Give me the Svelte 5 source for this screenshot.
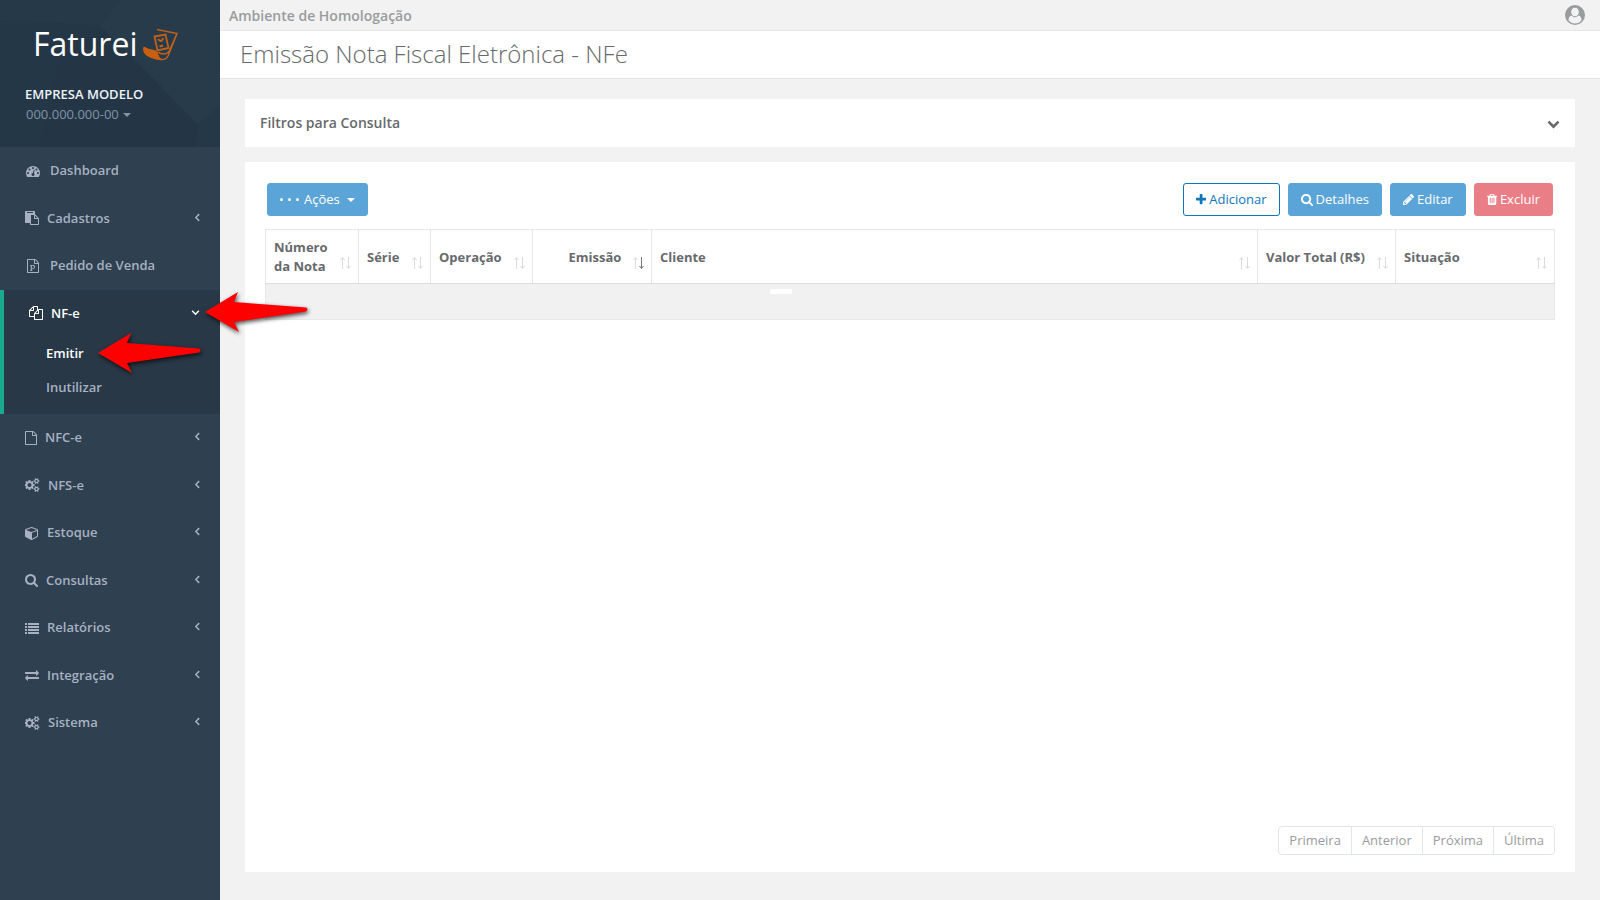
<script>
  const icons = {
    search: { w: 1664, d: 'M1152 832q0-185-131.500-316.500t-316.500-131.500-316.500 131.500-131.500 316.500 131.500 316.500 316.500 131.500 316.500-131.500 131.500-316.500zm512 832q0 52-38 90t-90 38q-54 0-90-38l-343-342q-179 124-399 124-143 0-273.500-55.500t-225-150-150-225-55.500-273.500 55.500-273.500 150-225 225-150 273.500-55.500 273.500 55.500 225 150 150 225 55.500 273.500q0 220-124 399l343 343q37 37 37 90z' },
    plus: { x: 192, w: 1408, d: 'M1600 736v192q0 40-28 68t-68 28h-416v416q0 40-28 68t-68 28h-192q-40 0-68-28t-28-68v-416h-416q-40 0-68-28t-28-68v-192q0-40 28-68t68-28h416v-416q0-40 28-68t68-28h192q40 0 68 28t28 68v416h416q40 0 68 28t28 68z' },
    pencil: { x: 128, w: 1536, d: 'M491 1536l91-91-235-235-91 91v107h128v128h107zm523-928q0-22-22-22-10 0-17 7l-542 542q-7 7-7 17 0 22 22 22 10 0 17-7l542-542q7-7 7-17zm-54-192l416 416-832 832h-416v-416zm683 96q0 53-37 90l-166 166-416-416 166-165q36-38 90-38 53 0 91 38l235 234q37 39 37 91z' },
    trash: { x: 192, w: 1408, d: 'M704 1376v-704q0-14-9-23t-23-9h-64q-14 0-23 9t-9 23v704q0 14 9 23t23 9h64q14 0 23-9t9-23zm256 0v-704q0-14-9-23t-23-9h-64q-14 0-23 9t-9 23v704q0 14 9 23t23 9h64q14 0 23-9t9-23zm256 0v-704q0-14-9-23t-23-9h-64q-14 0-23 9t-9 23v704q0 14 9 23t23 9h64q14 0 23-9t9-23zm-544-992h448l-48-117q-7-9-17-11h-317q-10 2-17 11zm928 32v64q0 14-9 23t-23 9h-96v948q0 83-47 143.500t-113 60.500h-832q-66 0-113-58.500t-47-141.500v-952h-96q-14 0-23-9t-9-23v-64q0-14 9-23t23-9h309l70-167q15-37 54-63t79-26h320q40 0 79 26t54 63l70 167h309q14 0 23 9t9 23z' },
    exchange: { w: 1792, d: 'M1792 1184v192q0 13-9.500 22.500t-22.500 9.500h-1376v192q0 13-9.500 22.500t-22.500 9.500q-12 0-24-10l-319-320q-9-9-9-22 0-14 9-23l320-320q9-9 23-9 13 0 22.500 9.500t9.500 22.500v192h1376q13 0 22.500 9.500t9.500 22.500zm0-544q0 14-9 23l-320 320q-9 9-23 9-13 0-22.500-9.500t-9.500-22.500v-192h-1376q-13 0-22.500-9.500t-9.500-22.500v-192q0-13 9.500-22.500t22.500-9.500h1376v-192q0-14 9-23t23-9q12 0 24 10l319 319q9 9 9 23z' },
    list: { w: 1792, d: 'M0 256h256v256H0zM384 256h1408v256H384zM0 640h256v256H0zM384 640h1408v256H384zM0 1024h256v256H0zM384 1024h1408v256H384zM0 1408h256v256H0zM384 1408h1408v256H384z' },
    cube: { w: 1792, d: 'M896 1629l640-349v-636l-640 233v752zm-64-865l698-254-698-254-698 254zm832-252v768q0 35-18 65t-49 47l-704 384q-28 16-61 16t-61-16l-704-384q-31-17-49-47t-18-65v-768q0-40 23-73t61-47l704-256q22-8 44-8t44 8l704 256q38 14 61 47t23 73z' },
    file: { w: 1536, d: 'M1468 380q28 28 48 76t20 88v1152q0 40-28 68t-68 28h-1344q-40 0-68-28t-28-68v-1600q0-40 28-68t68-28h896q40 0 88 20t76 48zm-444-244v376h376q-10-29-22-41l-313-313q-12-12-41-22zm384 1528v-1024h-416q-40 0-68-28t-28-68v-416h-768v1536h1280z' },
    filep: { x: -128, w: 1792, d: 'M1468 380q28 28 48 76t20 88v1152q0 40-28 68t-68 28h-1344q-40 0-68-28t-28-68v-1600q0-40 28-68t68-28h896q40 0 88 20t76 48zm-444-244v376h376q-10-29-22-41l-313-313q-12-12-41-22zm384 1528v-1024h-416q-40 0-68-28t-28-68v-416h-768v1536h1280zM384 1430v106h327v-106h-93v-167h137q76 0 118-15 66-23 106.500-88t40.500-147q0-81-37-143t-100-87q-46-18-132-18h-367v107h92v558h-92zM743 1154h-125v-277h126q54 0 86 18 58 36 58 120 0 86-62 122-30 17-83 17z' },
    files: { w: 1792, d: 'M1696 384q40 0 68 28t28 68v1216q0 40-28 68t-68 28h-960q-40 0-68-28t-28-68v-288h-544q-40 0-68-28t-28-68v-672q0-40 20-88t48-76l408-408q28-28 76-48t88-20h416q40 0 68 28t28 68v328q68-40 128-40h416zm-544 213l-299 299h299v-299zm-640-384l-299 299h299v-299zm196 647l316-316v-416h-384v416q0 40-28 68t-68 28h-416v640h512v-256q0-40 20-88t48-76zm956 804v-1152h-384v416q0 40-28 68t-68 28h-416v640h896z' },
    paste: { w: 1792, d: 'M768 1664h896v-640h-416q-40 0-68-28t-28-68v-416h-384v1152zm256-1440v-64q0-13-9.500-22.500t-22.500-9.500h-704q-13 0-22.500 9.500t-9.500 22.500v64q0 13 9.500 22.500t22.500 9.500h704q13 0 22.500-9.500t9.500-22.500zm256 672h299l-299-299v299zm512 128v672q0 40-28 68t-68 28h-960q-40 0-68-28t-28-68v-160h-544q-40 0-68-28t-28-68v-1344q0-40 28-68t68-28h1088q40 0 68 28t28 68v328q21 13 36 28l408 408q28 28 48 76t20 88z' },
    gauge: { w: 1792, d: 'M384 1152q0-53-37.500-90.500t-90.500-37.500-90.500 37.500-37.500 90.500 37.500 90.500 90.500 37.500 90.500-37.500 37.500-90.500zm192-448q0-53-37.500-90.500t-90.500-37.500-90.500 37.500-37.500 90.500 37.500 90.500 90.500 37.500 90.500-37.500 37.500-90.500zm428 481l101-382q6-26-7.500-48.500t-38.500-29.500-48 6.500-30 39.500l-101 382q-60 5-107 43.500t-63 98.500q-20 77 20 146t117 89 146-20 89-117q16-60-6-117t-72-91zm660-33q0-53-37.500-90.500t-90.500-37.500-90.500 37.500-37.500 90.500 37.500 90.500 90.500 37.500 90.500-37.500 37.500-90.500zm-640-640q0-53-37.500-90.500t-90.500-37.500-90.500 37.500-37.500 90.500 37.500 90.500 90.500 37.500 90.500-37.500 37.500-90.500zm448 192q0-53-37.500-90.500t-90.500-37.500-90.500 37.500-37.500 90.500 37.500 90.500 90.500 37.500 90.500-37.500 37.500-90.500zm320 448q0 261-141 483-19 29-54 29h-1402q-35 0-54-29-141-221-141-483 0-182 71-348t191-286 286-191 348-71 348 71 286 191 191 286 71 348z' },
    cogs: { w: 1920, d: 'M832 896q0-106-75-181t-181-75-181 75-75 181 75 181 181 75 181-75 75-181zm768 512q0-52-38-90t-90-38-90 38-38 90q0 53 37.500 90.500t90.500 37.500 90.500-37.500 37.500-90.500zm0-1024q0-52-38-90t-90-38-90 38-38 90q0 53 37.500 90.500t90.500 37.500 90.500-37.500 37.500-90.500zm-384 421v185q0 10-7 19.500t-16 10.500l-155 24q-11 35-32 76 34 48 90 115 7 11 7 20 0 12-7 19-23 30-82.500 89.500t-78.500 59.500q-11 0-21-7l-115-90q-37 19-77 31-11 108-23 155-7 24-30 24h-186q-11 0-20-7.500t-10-17.500l-23-153q-34-10-75-31l-118 89q-7 7-20 7-11 0-21-8-144-133-144-160 0-9 7-19 10-14 41-53t47-61q-23-44-35-82l-152-24q-10-1-17-9.500t-7-19.500v-185q0-10 7-19.500t16-10.500l155-24q11-35 32-76-34-48-90-115-7-11-7-20 0-12 7-20 22-30 82-89t79-59q11 0 21 7l115 90q34-18 77-32 11-108 23-154 7-24 30-24h186q11 0 20 7.500t10 17.500l23 153q34 10 75 31l118-89q8-7 20-7 11 0 21 8 144 133 144 160 0 8-7 19-12 16-42 54t-45 60q23 48 34 82l152 23q10 2 17 10.500t7 19.500zm640 533v140q0 16-149 31-12 27-30 52 51 113 51 138 0 4-4 7-122 71-124 71-8 0-46-47t-52-68q-20 2-30 2t-30-2q-14 21-52 68t-46 47q-2 0-124-71-4-3-4-7 0-25 51-138-18-25-30-52-149-15-149-31v-140q0-16 149-31 13-29 30-52-51-113-51-138 0-4 4-7 4-2 35-20t59-34 30-16q8 0 46 46.500t52 67.500q20-2 30-2t30 2q51-71 92-112l6-2q4 0 124 70 4 3 4 7 0 25-51 138 17 23 30 52 149 15 149 31zm0-1024v140q0 16-149 31-12 27-30 52 51 113 51 138 0 4-4 7-122 71-124 71-8 0-46-47t-52-68q-20 2-30 2t-30-2q-14 21-52 68t-46 47q-2 0-124-71-4-3-4-7 0-25 51-138-18-25-30-52-149-15-149-31v-140q0-16 149-31 13-29 30-52-51-113-51-138 0-4 4-7 4-2 35-20t59-34 30-16q8 0 46 46.500t52 67.500q20-2 30-2t30 2q51-71 92-112l6-2q4 0 124 70 4 3 4 7 0 25-51 138 17 23 30 52 149 15 149 31z' },
    chevron: { w: 1792, d: 'M1683 808l-742 741q-19 19-45 19t-45-19l-742-741q-19-19-19-45.500t19-45.500l166-165q19-19 45-19t45 19l531 531 531-531q19-19 45-19t45 19l166 165q19 19 19 45.500t-19 45.500z' }
  };

  const menu = [
    { label: 'Dashboard', icon: 'gauge', spaced: true },
    { label: 'Cadastros', icon: 'paste', more: true },
    { label: 'Pedido de Venda', icon: 'filep', spaced: true },
    { label: 'NF-e', icon: 'files', more: true, children: ['Emitir', 'Inutilizar'] },
    { label: 'NFC-e', icon: 'file', more: true },
    { label: 'NFS-e', icon: 'cogs', more: true },
    { label: 'Estoque', icon: 'cube', more: true },
    { label: 'Consultas', icon: 'search', more: true },
    { label: 'Relatórios', icon: 'list', more: true },
    { label: 'Integração', icon: 'exchange', more: true },
    { label: 'Sistema', icon: 'cogs', more: true }
  ];

  const columns = [
    { label: 'Número da Nota', width: 93 },
    { label: 'Série', width: 72 },
    { label: 'Operação', width: 102 },
    { label: 'Emissão', width: 119, center: true, sorted: true },
    { label: 'Cliente' },
    { label: 'Valor Total (R$)', width: 138 },
    { label: 'Situação', width: 159 }
  ];

  const pages = ['Primeira', 'Anterior', 'Próxima', 'Última'];
</script>

{#snippet icon(name)}
  <svg class="icon" viewBox="{icons[name].x ?? 0} 0 {icons[name].w} 1792" style="width: {icons[name].w / 1792}em" aria-hidden="true">
    <path d={icons[name].d} />
  </svg>
{/snippet}

{#snippet pointer()}
  <svg class="pointer" viewBox="0 0 104 42" aria-hidden="true">
    <path d="M1 20L34 0L30 10L102 15.500Q105 17 102 19.500L30 30L35 40Z" />
  </svg>
{/snippet}

<div class="layout">
  <nav class="sidebar" aria-label="Menu principal">
    <header class="profile">
      <svg class="facets" viewBox="0 0 220 147" preserveAspectRatio="none" aria-hidden="true">
        <path d="M0 0H120L100 26L0 20Z" fill="#253949" />
        <path d="M120 0H220V118L197 124L130 55L100 26Z" fill="#273b4a" />
        <path d="M0 20L100 26L60 60L40 147H0Z" fill="#243747" />
        <path d="M130 55L197 124L196 147H40L60 60L100 26Z" fill="#243646" />
        <path d="M197 124L220 106V147H196Z" fill="#253848" />
      </svg>
      <a class="brand" href="#inicio">
        <span>Faturei</span>
        <svg class="brandmark" viewBox="0 0 36 34" aria-hidden="true">
          <path d="M1 20.500Q5 23 10 23.500Q14 24 14.500 27Q15 30 18 32.500Q10 31.500 5 28.500Q0 25.500 1 20.500Z" fill="#c95f10" stroke="#c95f10" stroke-linejoin="round" />
          <path d="M14 2.500L34 6.500L25 29Q23 33 18 32.500M34 6.500L28 20Q26 27 21 27Q17 27 15 25" />
          <path d="M11.500 9.500L22.500 7.500L25.500 21L14.500 23.500Z" stroke-width="1.800" />
          <path d="M15 12Q17 14.500 18 14Q20 13 20 11M16.500 19.500L20 18.500" stroke-width="2" />
        </svg>
      </a>
      <strong>EMPRESA MODELO</strong>
      <button class="company" type="button">000.000.000-00 <i class="caret"></i></button>
    </header>

    <ul class="menu">
      {#each menu as item}
        <li class:active={item.children}>
          <a href="#{item.label}" class:spaced={item.spaced}>
            {@render icon(item.icon)}
            <span>{item.label}</span>
            {#if item.more}
              <svg class="angle" class:open={item.children} viewBox="0 0 8 8" aria-hidden="true"><path d="M5.500 1L2.500 4L5.500 7" /></svg>
            {/if}
          </a>
          {#if item.children}
            {@render pointer()}
            <ul class="submenu">
              {#each item.children as child, i}
                <li class:current={i === 0}>
                  <a href="#{child}">{child}</a>
                  {#if i === 0}{@render pointer()}{/if}
                </li>
              {/each}
            </ul>
          {/if}
        </li>
      {/each}
    </ul>
  </nav>

  <div class="page">
    <header class="topbar">
      <strong>Ambiente de Homologação</strong>
      <button class="user" type="button" aria-label="Usuário">
        <svg viewBox="0 0 20 20" aria-hidden="true">
          <circle cx="10" cy="10" r="10" fill="#999c9e" />
          <path d="M3.500 15.500C3.500 12.500 5 10.600 7 10.600Q8.500 11.800 10 11.800T13 10.600C15 10.600 16.500 12.500 16.500 15.500Q13.800 18.600 10 18.600T3.500 15.500Z" fill="#f3f3f4" />
          <ellipse cx="10" cy="7" rx="4.300" ry="4.800" fill="#f3f3f4" stroke="#999c9e" stroke-width="1" />
        </svg>
      </button>
    </header>
    <div class="heading"><h1>Emissão Nota Fiscal Eletrônica - NFe</h1></div>

    <main>
      <section class="filters">
        <h2>Filtros para Consulta</h2>
        <button type="button" aria-label="Expandir filtros">{@render icon('chevron')}</button>
      </section>

      <section class="panel">
        <div class="toolbar">
          <button class="btn" type="button"><span class="dots"><i></i><i></i><i></i></span>Ações<i class="caret"></i></button>
          <div class="actions">
            <button class="btn outline" type="button">{@render icon('plus')}Adicionar</button>
            <button class="btn" type="button">{@render icon('search')}Detalhes</button>
            <button class="btn" type="button">{@render icon('pencil')}Editar</button>
            <button class="btn danger" type="button">{@render icon('trash')}Excluir</button>
          </div>
        </div>

        <table>
          <colgroup>
            {#each columns as col}
              <col style={col.width ? `width: ${col.width}px` : ''} />
            {/each}
          </colgroup>
          <thead>
            <tr>
              {#each columns as col}
                <th scope="col">
                  <div class="head" class:center={col.center}>
                    <span>{col.label}</span>
                    <svg class="sort" class:sorted={col.sorted} viewBox="0 0 12 14" aria-hidden="true">
                      <path d="M2.500 13V2M0.500 4L2.500 1.500L4.500 4" />
                      <path class="down" d="M8.500 1V12M6.500 10L8.500 12.500L10.500 10" />
                    </svg>
                  </div>
                </th>
              {/each}
            </tr>
          </thead>
          <tbody>
            <tr><td colspan={columns.length}><div class="loading"></div></td></tr>
          </tbody>
        </table>

        <div class="pagination">
          {#each pages as p}
            <button type="button" disabled>{p}</button>
          {/each}
        </div>
      </section>
    </main>
  </div>
</div>

<style>
  :global(body) {
    background: #f2f2f2;
    color: #676a6c;
    font: 13px/1.5 'Open Sans', sans-serif;
  }
  * { box-sizing: border-box; }
  button { font: inherit; color: inherit; border: 0; background: none; padding: 0; }
  a { color: inherit; text-decoration: none; }
  ul { list-style: none; margin: 0; padding: 0; }
  .icon { height: 1em; fill: currentColor; flex: none; }
  .layout { display: flex; min-height: 100vh; }

  .sidebar { width: 220px; flex: none; background: #2f4050; color: #a7b1c2; }
  .profile {
    position: relative;
    isolation: isolate;
    height: 147px;
    padding: 24px 25px 0;
    display: flex;
    flex-direction: column;
    align-items: flex-start;
  }
  .facets { position: absolute; inset: 0; width: 100%; height: 100%; z-index: -1; background: #243747; }
  .brand { display: flex; align-items: center; gap: 6px; height: 40px; margin: 0 0 20px 8px; color: #fff; font: 32px/40px 'Open Sans', sans-serif; }
  .brandmark { width: 36px; height: 34px; fill: none; stroke: #c0601a; stroke-width: 1.500; }
  .profile strong { color: #eef2f6; font-weight: 600; line-height: 20px; }
  .company { color: #8095a8; line-height: 20px; margin-left: 1px; }
  .caret { display: inline-block; border: 4px solid transparent; border-top-color: currentColor; border-bottom: 0; vertical-align: 2px; margin-left: 1px; }

  .menu > li > a { display: flex; align-items: center; padding: 14px 20px 14px 25px; font-weight: 600; }
  .menu > li > a > .icon { font-size: 14px; margin-right: 8px; }
  .menu > li > a.spaced > .icon { margin: 0 10px 0 1px; }
  .angle { width: 9px; height: 9px; margin: 0 -2px 2px auto; fill: none; stroke: currentColor; stroke-width: 1.300; }
  .angle.open { transform: rotate(-90deg); margin-right: 0; }
  .active { position: relative; background: #293846; border-left: 4px solid #19aa8d; }
  .active > a { color: #fff; }
  .submenu { padding-bottom: 10px; font-weight: 600; }
  .submenu li { position: relative; padding: 7px 10px 7px 42px; }
  .submenu .current { color: #fff; }
  .pointer { position: absolute; z-index: 2; width: 104px; height: 42px; fill: #f00; filter: drop-shadow(1px 2px 2px rgba(0, 0, 0, 0.7)); overflow: visible; pointer-events: none; }
  .active > .pointer { left: 200px; top: 2px; }
  .current .pointer { left: 93px; top: -4px; }

  .page { flex: 1; min-width: 0; display: flex; flex-direction: column; }
  .topbar { display: flex; justify-content: space-between; align-items: center; height: 31px; padding: 0 15px 0 9px; border-bottom: 1px solid #e7e7e7; color: #999c9e; font-size: 14px; }
  .topbar strong { font-weight: 600; }
  .user { width: 20px; height: 20px; }
  .user svg { display: block; }
  .heading { background: #fff; border-bottom: 1px solid #e4e4e4; padding: 0 20px; height: 48px; }
  h1 { margin: 0; font-size: 24px; font-weight: 300; line-height: 46px; }
  main { flex: 1; display: flex; flex-direction: column; gap: 15px; padding: 20px 25px 28px; }
  section { background: #fff; }
  .filters { display: flex; justify-content: space-between; align-items: center; height: 48px; padding: 0 15px; }
  h2 { margin: 0; padding-bottom: 2px; font-size: 14px; font-weight: 600; }
  .filters button { display: flex; font-size: 13px; }
  .panel { flex: 1; display: flex; flex-direction: column; padding: 21px 20px 17px; }

  .toolbar { display: flex; justify-content: space-between; padding: 0 2px; margin-bottom: 13px; }
  .actions { display: flex; gap: 8px; }
  .btn { display: flex; align-items: center; gap: 3px; height: 33px; padding: 0 12px; border: 1px solid #5ba4d8; border-radius: 3px; background: #5ba4d8; color: #fff; }
  .outline { background: #fff; border-color: #0e76bc; color: #0e76bc; }
  .danger { background: #e97e87; border-color: #e97e87; }
  .dots { display: flex; gap: 5px; margin-right: 2px; }
  .dots i { width: 3px; height: 3px; border-radius: 50%; background: currentColor; }
  .btn .caret { margin-left: 4px; }

  table { width: 100%; table-layout: fixed; border-collapse: collapse; }
  th, td { border: 1px solid #e7e7e7; padding: 0 8px; }
  th { height: 54px; padding-top: 1px; border-bottom-color: #ddd; text-align: left; font-weight: 700; line-height: 19px; }
  .head { display: flex; justify-content: space-between; align-items: center; }
  .head.center span { flex: 1; text-align: center; padding-left: 16px; }
  .sort { width: 12px; height: 14px; flex: none; margin: 12px -2px 0 0; fill: none; stroke: #dcdcdc; }
  .sorted .down { stroke: #777; }
  td { height: 36px; background: #f1f1f1; vertical-align: top; }
  .loading { width: 22px; height: 5px; margin: 5px 0 0 39%; background: #fff; }

  .pagination { display: flex; align-self: flex-end; margin-top: auto; border: 1px solid #e1e6ea; border-radius: 4px; }
  .pagination button { height: 27px; padding: 0 10px; color: #999c9e; }
  .pagination button + button { border-left: 1px solid #e1e6ea; }
</style>
